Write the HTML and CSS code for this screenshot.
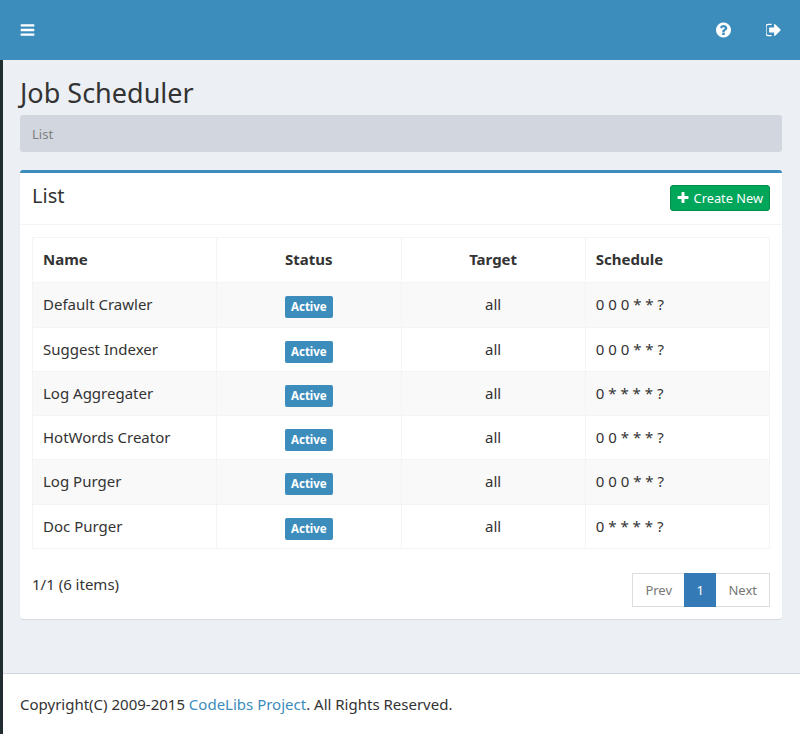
FILE: index.html
```html
<!DOCTYPE html>
<html>
<head>
	<title>Job Scheduler</title>
	<link rel="stylesheet" href="styles.css">
</head>
<body>
	<header class="topbar">
		<a class="toggle" href="#">
			<svg class="icon" viewBox="0 0 1536 1792"><path transform="translate(-128 0)" d="M1664 1344v128q0 26-19 45t-45 19h-1408q-26 0-45-19t-19-45v-128q0-26 19-45t45-19h1408q26 0 45 19t19 45zm0-512v128q0 26-19 45t-45 19h-1408q-26 0-45-19t-19-45v-128q0-26 19-45t45-19h1408q26 0 45 19t19 45zm0-512v128q0 26-19 45t-45 19h-1408q-26 0-45-19t-19-45v-128q0-26 19-45t45-19h1408q26 0 45 19t19 45z"/></svg>
		</a>
		<div class="topbar-right">
			<a href="#">
				<svg class="icon" viewBox="128 128 1536 1536"><path d="M1024 1376v-192q0-14-9-23t-23-9h-192q-14 0-23 9t-9 23v192q0 14 9 23t23 9h192q14 0 23-9t9-23zm256-672q0-88-55.5-163t-138.5-116-170-41q-243 0-371 213-15 24 8 42l132 100q7 6 19 6 16 0 25-12 53-68 86-92 34-24 86-24 48 0 85.5 26t37.5 59q0 38-20 61t-68 45q-63 28-115.5 86.5t-52.5 125.5v36q0 14 9 23t23 9h192q14 0 23-9t9-23q0-19 21.5-49.5t54.5-49.5q32-18 49-28.5t46-35 44.5-48 28-60.5 12.5-81zm384 192q0 209-103 385.5t-279.5 279.5-385.5 103-385.5-103-279.5-279.5-103-385.5 103-385.5 279.5-279.5 385.5-103 385.5 103 279.5 279.5 103 385.5z"/></svg>
			</a>
			<a href="#">
				<svg class="icon" viewBox="128 128 1536 1536"><path d="M704 1440q0 4 1 20t.5 26.5-3 23.5-10 19.5-20.5 6.5h-320q-119 0-203.5-84.5t-84.5-203.5v-704q0-119 84.5-203.5t203.5-84.5h320q13 0 22.5 9.5t9.5 22.5q0 4 1 20t.5 26.5-3 23.5-10 19.5-20.5 6.5h-320q-66 0-113 47t-47 113v704q0 66 47 113t113 47h312l11.5 1 11.5 3 8 5.5 7 9 2 13.5zm928-544q0 26-19 45l-544 544q-19 19-45 19t-45-19-19-45v-288h-448q-26 0-45-19t-19-45v-384q0-26 19-45t45-19h448v-288q0-26 19-45t45-19 45 19l544 544q19 19 19 45z"/></svg>
			</a>
		</div>
	</header>

	<div class="wrapper">
		<main class="content">
			<h1>Job Scheduler</h1>
			<div class="breadcrumb">List</div>

			<section class="box">
				<div class="box-header">
					<h3>List</h3>
					<a class="btn-create" href="#">
						<svg class="icon-plus" viewBox="128 128 1536 1536"><path d="M1600 736v192q0 40-28 68t-68 28h-416v416q0 40-28 68t-68 28h-192q-40 0-68-28t-28-68v-416h-416q-40 0-68-28t-28-68v-192q0-40 28-68t68-28h416v-416q0-40 28-68t68-28h192q40 0 68 28t28 68v416h416q40 0 68 28t28 68z"/></svg>
						Create New
					</a>
				</div>
				<div class="box-body">
					<table>
						<thead>
							<tr>
								<th>Name</th>
								<th class="center">Status</th>
								<th class="center">Target</th>
								<th>Schedule</th>
							</tr>
						</thead>
						<tbody>
							<tr class="tall">
								<td>Default Crawler</td>
								<td class="center"><span class="label">Active</span></td>
								<td class="center">all</td>
								<td>0 0 0 * * ?</td>
							</tr>
							<tr>
								<td>Suggest Indexer</td>
								<td class="center"><span class="label">Active</span></td>
								<td class="center">all</td>
								<td>0 0 0 * * ?</td>
							</tr>
							<tr>
								<td>Log Aggregater</td>
								<td class="center"><span class="label">Active</span></td>
								<td class="center">all</td>
								<td>0 * * * * ?</td>
							</tr>
							<tr>
								<td>HotWords Creator</td>
								<td class="center"><span class="label">Active</span></td>
								<td class="center">all</td>
								<td>0 0 * * * ?</td>
							</tr>
							<tr class="tall">
								<td>Log Purger</td>
								<td class="center"><span class="label">Active</span></td>
								<td class="center">all</td>
								<td>0 0 0 * * ?</td>
							</tr>
							<tr>
								<td>Doc Purger</td>
								<td class="center"><span class="label">Active</span></td>
								<td class="center">all</td>
								<td>0 * * * * ?</td>
							</tr>
						</tbody>
					</table>

					<div class="list-footer">
						<span class="count">1/1 (6 items)</span>
						<ul class="pagination">
							<li>Prev</li>
							<li class="active">1</li>
							<li>Next</li>
						</ul>
					</div>
				</div>
			</section>
		</main>

		<footer class="footer">
			Copyright(C) 2009-2015 <a href="#">CodeLibs Project</a>. All Rights Reserved.
		</footer>
	</div>
</body>
</html>
```

FILE: styles.css
```css
* {
	box-sizing: border-box;
}

html, body {
	height: 100%;
}

body {
	margin: 0;
	display: flex;
	flex-direction: column;
	background: #ecf0f5;
	color: #333;
	font-family: "Noto Sans", "Open Sans", sans-serif;
	font-size: 15px;
	line-height: 20px;
	overflow: hidden;
}

a {
	color: #3c8dbc;
	text-decoration: none;
}

.topbar {
	height: 60px;
	flex: none;
	display: flex;
	align-items: center;
	justify-content: space-between;
	background: #3c8dbc;
	padding: 0 19px 0 20px;
}

.topbar a {
	display: flex;
	color: #fff;
}

.icon {
	width: 15px;
	height: 16px;
	fill: currentColor;
}

.topbar-right {
	display: flex;
	gap: 35px;
}

.wrapper {
	flex: 1;
	display: flex;
	flex-direction: column;
	border-left: 3px solid #222d32;
}

.content {
	flex: 1;
	padding: 15px 18px 0 17px;
}

h1 {
	margin: 0;
	font-size: 27px;
	font-weight: 400;
	line-height: 36px;
}

.breadcrumb {
	height: 37px;
	margin-top: 4px;
	padding: 9px 12px;
	background: #d2d6de;
	border-radius: 3px;
	color: #808080;
	font-size: 13px;
}

.box {
	margin-top: 18px;
	background: #fff;
	border-top: 3px solid #3c8dbc;
	border-radius: 3px;
	box-shadow: 0 1px 1px rgba(0, 0, 0, .1);
}

.box-header {
	height: 52px;
	display: flex;
	align-items: center;
	justify-content: space-between;
	padding: 0 12px;
	border-bottom: 1px solid #f4f4f4;
}

h3 {
	margin: 0 0 5px;
	font-size: 20px;
	font-weight: 400;
	line-height: 36px;
}

.btn-create {
	height: 26px;
	margin-bottom: 2px;
	display: flex;
	align-items: center;
	gap: 5px;
	padding: 0 6px;
	background: #00a65a;
	border: 1px solid #008d4c;
	border-radius: 3px;
	color: #fff;
	font-size: 12.8px;
}

.icon-plus {
	width: 12px;
	height: 12px;
	fill: currentColor;
}

.box-body {
	padding: 12px;
}

table {
	width: 100%;
	table-layout: fixed;
	border-collapse: collapse;
	border: 1px solid #f4f4f4;
}

th, td {
	height: 44px;
	padding: 0 10px 2px;
	border: 1px solid #f4f4f4;
	text-align: left;
}

th {
	height: 45px;
	font-weight: 700;
}

.tall td {
	height: 45px;
}

.center {
	text-align: center;
}

tbody tr:nth-child(odd) {
	background: #f9f9f9;
}

.label {
	display: inline-block;
	margin-top: 6px;
	padding: 2px 6px;
	background: #3c8dbc;
	border-radius: 2px;
	color: #fff;
	font-size: 11.5px;
	font-weight: 700;
	line-height: 18px;
	vertical-align: middle;
}

.list-footer {
	display: flex;
	justify-content: space-between;
	margin-top: 24px;
}

.count {
	margin-top: 1px;
}

.pagination {
	display: flex;
	margin: 0;
	padding: 0;
	list-style: none;
	border: 1px solid #ddd;
	color: #777;
	font-size: 13px;
	line-height: 32px;
}

.pagination li {
	padding: 0 12px;
}

.pagination .active {
	margin: -1px 0;
	padding: 0 12.5px;
	background: #337ab7;
	color: #fff;
	line-height: 34px;
}

.footer {
	height: 61px;
	flex: none;
	padding: 20px 18px 0 17px;
	background: #fff;
	border-top: 1px solid #d2d6de;
}
```
